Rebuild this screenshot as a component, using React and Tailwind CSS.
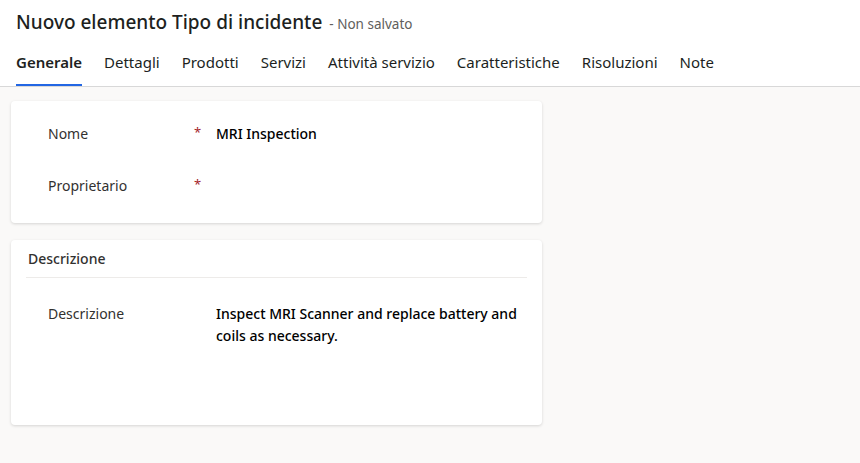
import React from "react";

const tabs = [
  "Generale",
  "Dettagli",
  "Prodotti",
  "Servizi",
  "Attività servizio",
  "Caratteristiche",
  "Risoluzioni",
  "Note",
];

const Field = ({ label, required, value, className = "" }) => (
  <div className={`flex items-start ${className}`}>
    <div className="w-[146px] text-[14px] text-[#323130] pl-[37px] box-content">
      {label}
    </div>
    <div className="w-[22px] text-[#a4262c] text-[13px]">{required ? "*" : ""}</div>
    <div className="flex-1 text-[14px] font-medium text-[#000] leading-[22px] pr-4">
      {value}
    </div>
  </div>
);

export default function App() {
  return (
    <div
      className="w-[860px] h-[463px] bg-[#faf9f8] overflow-hidden"
      style={{ fontFamily: '"Noto Sans", "Open Sans", sans-serif' }}
    >
      {/* Header */}
      <div className="bg-white border-b border-[#d8d8d8]">
        <div className="flex items-baseline pl-4 pt-[8px] h-[40px]">
          <h1 className="text-[19px] text-[#201f1e] font-medium">
            Nuovo elemento Tipo di incidente
          </h1>
          <span className="ml-[7px] text-[13.5px] text-[#605e5c]">- Non salvato</span>
        </div>
        <div className="flex pl-4 gap-[22px] h-[46px]">
          {tabs.map((t, i) => (
            <div
              key={t}
              className={`relative flex items-center pb-[2px] text-[15px] text-[#201f1e] ${
                i === 0 ? "font-semibold" : ""
              }`}
            >
              {t}
              {i === 0 && (
                <span className="absolute left-0 right-0 bottom-0 h-[2px] bg-[#2266e3]" />
              )}
            </div>
          ))}
        </div>
      </div>

      {/* Cards */}
      <div className="pl-[11px] pt-[14px] w-[542px] flex flex-col gap-[17px]">
        <div className="bg-white rounded-[4px] shadow-[0_1px_3px_rgba(0,0,0,0.15)] h-[122px] pt-[22px]">
          <Field label="Nome" required value="MRI Inspection" />
          <Field label="Proprietario" required value="" className="mt-[30px]" />
        </div>

        <div className="bg-white rounded-[4px] shadow-[0_1px_3px_rgba(0,0,0,0.15)] h-[185px] px-[15px]">
          <div className="text-[14px] font-medium text-[#323130] pt-[8px] pb-[8px] pl-[2px] border-b border-[#edebe9]">
            Descrizione
          </div>
          <div className="mt-[25px] -mx-[15px]">
            <Field
              label="Descrizione"
              value="Inspect MRI Scanner and replace battery and coils as necessary."
            />
          </div>
        </div>
      </div>
    </div>
  );
}
